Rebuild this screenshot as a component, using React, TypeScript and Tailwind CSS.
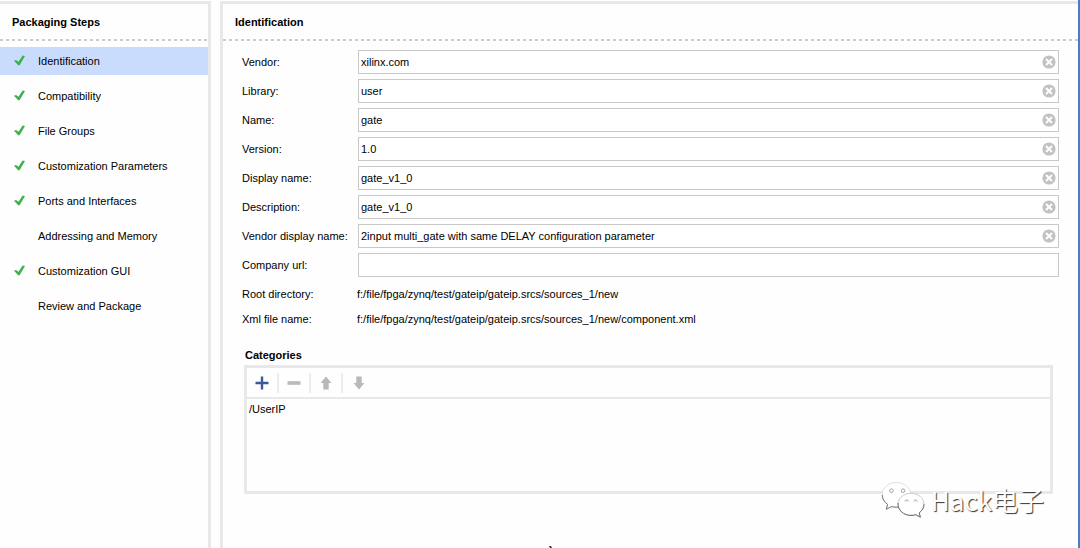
import React, { useState } from "react";

type Step = { name: string; done: boolean };

const steps: Step[] = [
  { name: "Identification", done: true },
  { name: "Compatibility", done: true },
  { name: "File Groups", done: true },
  { name: "Customization Parameters", done: true },
  { name: "Ports and Interfaces", done: true },
  { name: "Addressing and Memory", done: false },
  { name: "Customization GUI", done: true },
  { name: "Review and Package", done: false },
];

const initialFields = [
  { id: "vendor", label: "Vendor:", value: "xilinx.com" },
  { id: "library", label: "Library:", value: "user" },
  { id: "name", label: "Name:", value: "gate" },
  { id: "version", label: "Version:", value: "1.0" },
  { id: "display-name", label: "Display name:", value: "gate_v1_0" },
  { id: "description", label: "Description:", value: "gate_v1_0" },
  {
    id: "vendor-display-name",
    label: "Vendor display name:",
    value: "2input multi_gate with same DELAY configuration parameter",
  },
  { id: "company-url", label: "Company url:", value: "" },
];

const paths = [
  { label: "Root directory:", value: "f:/file/fpga/zynq/test/gateip/gateip.srcs/sources_1/new" },
  { label: "Xml file name:", value: "f:/file/fpga/zynq/test/gateip/gateip.srcs/sources_1/new/component.xml" },
];

function CheckIcon() {
  return (
    <svg width="12" height="12" viewBox="0 0 12 12" aria-hidden="true">
      <path d="M0 5.8 L2 4.9 L4.500 6.800 L8.600 0.600 L11 0.900 L5.600 10.200 L4.200 10.200 Z" fill="#3fb14d" />
    </svg>
  );
}

function ClearIcon() {
  return (
    <svg width="14" height="14" viewBox="0 0 14 14" aria-hidden="true">
      <circle cx="7" cy="7" r="6.6" fill="#c2c2c2" />
      <path d="M4 4 L10 10 M10 4 L4 10" stroke="#fff" strokeWidth="1.9" />
    </svg>
  );
}

function PanelHeader({ title, className }: { title: string; className: string }) {
  return (
    <header>
      <h2 className={`flex h-[35px] items-center font-bold ${className}`}>{title}</h2>
      <div className="h-0.5 bg-[repeating-linear-gradient(90deg,#cbcbcb_0_3px,transparent_3px_6px)]" />
    </header>
  );
}

function ToolButton({ label, disabled, children }: { label: string; disabled?: boolean; children: React.ReactNode }) {
  return (
    <button type="button" aria-label={label} disabled={disabled} className="flex h-5 w-8 items-center justify-center">
      <svg width="14" height="14" viewBox="0 0 14 14" aria-hidden="true">
        {children}
      </svg>
    </button>
  );
}

function Watermark() {
  return (
    <div className="pointer-events-none absolute right-[34px] bottom-[29px] flex items-center gap-1.5">
      <svg width="44" height="38" viewBox="0 0 44 38" aria-hidden="true">
        <g strokeLinejoin="round">
          <path
            d="M15.5 1.5 C7.5 1.5 1.2 7 1.2 13.8 C1.2 17.7 3.2 21 6.6 23.3 L5.3 28 L10.5 25.3 C12 25.8 13.7 26 15.5 26 C23.5 26 30 20.500 30 13.800 C30 7 23.500 1.500 15.500 1.500 Z"
            fill="#fff"
            stroke="#d2d2d2"
            strokeWidth="0.7"
          />
          <path d="M1.2 14 C1.4 17.900 3.200 21 6.600 23.300 L5.300 28.300 L10.500 25.600 C12.500 26.200 14.500 26.400 17 26.200" fill="none" stroke="#777" />
          <path
            d="M30 12.300 C22.700 12.300 17 17.100 17 23.200 C17 29.400 22.700 34.200 30 34.200 C31.700 34.200 33.300 33.900 34.800 33.400 L39.400 36 L38.200 31.600 C41.200 29.500 43 26.600 43 23.200 C43 17.100 37.300 12.300 30 12.300 Z"
            fill="#fff"
            stroke="#bdbdbd"
            strokeWidth="0.8"
          />
          <path d="M17 22 C16.500 29 22.700 34.500 30 34.500 C31.700 34.500 33.300 34.200 34.800 33.700 L39.400 36.300 L38.200 31.900 C41.200 29.700 43 26.800 43 23.200" fill="none" stroke="#707070" />
        </g>
        <g fill="#fff" stroke="#999" strokeWidth="0.9">
          <circle cx="10.500" cy="9.700" r="1.800" />
          <circle cx="22" cy="9.700" r="1.800" />
          <path d="M24 20.500 A1.600 1.600 0 0 1 27.200 20.500 M33 20.500 A1.600 1.600 0 0 1 36.200 20.500" />
        </g>
      </svg>
      <span className="font-['Noto_Sans_CJK_SC',sans-serif] text-[26px] leading-8 font-normal text-white [text-shadow:1px_1px_1px_#333]">
        Hack电子
      </span>
    </div>
  );
}

export default function App() {
  const [active, setActive] = useState("Identification");
  const [fields, setFields] = useState(initialFields);

  const update = (id: string, value: string) =>
    setFields((all) => all.map((f) => (f.id === id ? { ...f, value } : f)));

  return (
    <div className="relative flex min-h-screen gap-[9px] overflow-hidden border-r-2 border-[#4a7cc8] bg-[#fefefe] pt-px font-['Liberation_Sans',Arial,sans-serif] text-[11px] leading-4 text-black">
      <aside className="w-[211px] shrink-0 border-t-3 border-r-3 border-[#e8e8e8]">
        <PanelHeader title="Packaging Steps" className="pl-3" />
        <nav aria-label="Packaging steps" className="mt-1.5 flex flex-col gap-[7px]">
          {steps.map((s) => (
            <button
              key={s.name}
              type="button"
              aria-current={active === s.name ? "step" : undefined}
              onClick={() => setActive(s.name)}
              className={`flex h-7 items-center gap-3 pl-[14px] text-left ${active === s.name ? "bg-[#cadcfe]" : ""}`}
            >
              <span className="w-3">{s.done && <CheckIcon />}</span>
              <span>{s.name}</span>
            </button>
          ))}
        </nav>
      </aside>

      <main className="min-w-0 flex-1 border-t-3 border-l-3 border-[#e8e8e8]">
        <PanelHeader title="Identification" className="pl-3" />
        <form className="mt-[9px] mr-[19px] ml-[19px] flex flex-col gap-[5px]" onSubmit={(e) => e.preventDefault()}>
          {fields.map((f) => (
            <div key={f.id} className="flex items-center">
              <label htmlFor={f.id} className="w-[116px] shrink-0 whitespace-nowrap">
                {f.label}
              </label>
              <div className="flex h-6 min-w-0 flex-1 items-center border border-[#c8c8c8] bg-white pr-0.5">
                <input
                  id={f.id}
                  type="text"
                  value={f.value}
                  onChange={(e) => update(f.id, e.target.value)}
                  className="h-full min-w-0 flex-1 bg-transparent pl-0.5 outline-none"
                />
                {f.value && (
                  <button type="button" aria-label={`Clear ${f.label}`} onClick={() => update(f.id, "")}>
                    <ClearIcon />
                  </button>
                )}
              </div>
            </div>
          ))}
        </form>
        <dl className="mt-1 ml-[19px]">
          {paths.map((p) => (
            <div key={p.label} className="flex h-[25px] items-center">
              <dt className="w-[115px] shrink-0">{p.label}</dt>
              <dd>{p.value}</dd>
            </div>
          ))}
        </dl>

        <section className="mt-4 mr-[25px] ml-[21px]">
          <h3 className="pl-px leading-4 font-bold">Categories</h3>
          <div className="mt-0.5 border-3 border-[#e8e8e8]">
            <div className="flex h-[31px] items-center divide-x-2 divide-[#ececec] border-b-2 border-[#e8e8e8]">
              <ToolButton label="Add category">
                <path d="M7 0.500 V13.500 M0.500 7 H13.500" stroke="#3b5998" strokeWidth="2.400" />
              </ToolButton>
              <ToolButton label="Remove category" disabled>
                <path d="M0.500 7 H13.500" stroke="#bababa" strokeWidth="3.600" />
              </ToolButton>
              <ToolButton label="Move up" disabled>
                <path d="M7 0.500 L12.500 7 H9.700 V13.500 H4.300 V7 H1.500 Z" fill="#b9b9b9" />
              </ToolButton>
              <ToolButton label="Move down" disabled>
                <path d="M7 13.500 L12.500 7 H9.700 V0.500 H4.300 V7 H1.500 Z" fill="#b9b9b9" />
              </ToolButton>
            </div>
            <ul className="min-h-[92px] px-0.5 pt-0.5">
              <li>/UserIP</li>
            </ul>
          </div>
        </section>
      </main>

      <Watermark />
      <svg className="absolute bottom-0 left-[549px]" width="4" height="2" viewBox="0 0 4 2" aria-hidden="true">
        <path d="M0 0 H2 L3 2 H1 Z" fill="#333" />
      </svg>
    </div>
  );
}
